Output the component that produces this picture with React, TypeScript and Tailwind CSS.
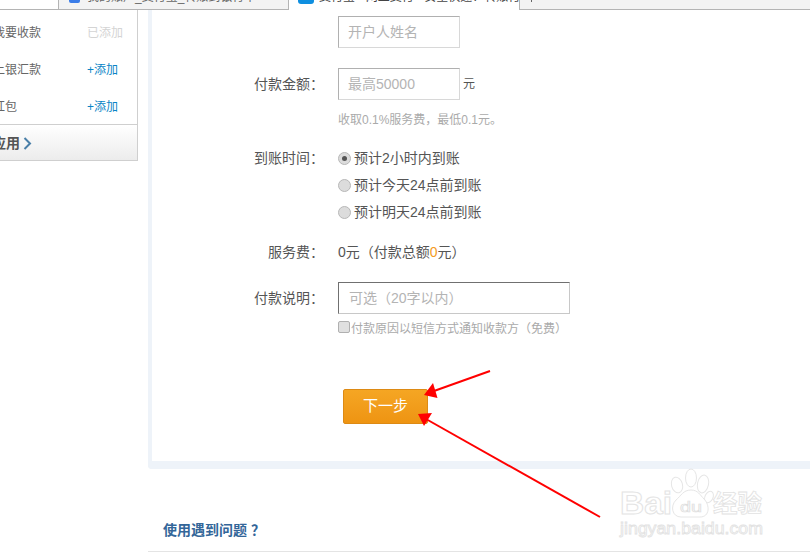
export default function App() {
  const cjk = "font-['Liberation_Sans','Noto_Sans_CJK_SC',sans-serif]";
  return (
    <div className={`relative w-[810px] h-[556px] overflow-hidden bg-white text-[14px] text-[#555] ${cjk}`}>
      <div className="flex h-[10px] overflow-hidden">
        <div className="w-[58px] border-b border-[#b4b4b4]" />
        <div className="flex items-start w-[231px] bg-[#f3f3f3] border-l border-r border-b border-[#b4b4b4] pl-[10px] gap-[7px] overflow-hidden">
          <div className="w-[11px] h-[3px] rounded-b-[2px] bg-[#3b7de8] shrink-0" />
          <div className="h-[12px] leading-[12px] text-[12px] text-[#666] whitespace-nowrap -translate-y-[9px]">我的账户_支付宝_转账到银行卡</div>
        </div>
        <div className="flex items-start w-[230px] pl-[9px] gap-[5px] overflow-hidden">
          <div className="w-[16px] h-[4px] rounded-b-[3px] bg-[#0f8fe0] shrink-0" />
          <div className="h-[14px] leading-[14px] text-[12px] text-[#444] whitespace-nowrap -translate-y-[10px]">支付宝 - 网上支付 - 安全快速！转账付款</div>
        </div>
        <div className="flex-1 bg-[#f3f3f3] border-l border-b border-[#b4b4b4] pl-[11px]">
          <div className="w-[1px] h-[2px] bg-[#666]" />
        </div>
      </div>

      <div className="flex h-[546px]">
        <aside className="w-[148px] shrink-0">
          <div className="w-[138px] border-r border-b border-[#cfcfcf]">
            <div className="flex flex-col h-[114px] text-[12px] text-[#666] pt-[4px]">
              {[
                ["我要收款", "已添加", "text-[#d4d4d4]"],
                ["上银汇款", "+添加", "text-[#0a84c6]"],
                ["红包", "+添加", "text-[#0a84c6]"],
              ].map(([a, b, c]) => (
                <div key={a} className="flex shrink-0 h-[37px] items-center -ml-[7px]">
                  <span className="w-[94px]">{a}</span>
                  <span className={c}>{b}</span>
                </div>
              ))}
            </div>
            <div className="flex items-center h-[36px] pt-[1px] border-t border-[#cfcfcf] bg-gradient-to-b from-white to-[#ececec] -ml-[8px] gap-[3px]">
              <span className="font-bold text-[#555]">应用</span>
              <svg width="9" height="13" viewBox="0 0 9 13"><path d="M1.5 1l5.5 5.5L1.500 12" fill="none" stroke="#4a7fa8" strokeWidth="2" /></svg>
            </div>
          </div>
        </aside>

        <main className="flex-1 flex flex-col">
          <div className="h-[459px] border-l-[4px] border-b-[8px] border-[#eef3f9] rounded-bl-[4px] flex flex-col pl-[186px] pt-[6px]">
            <div className="w-[122px] h-[32px] border border-[#d8d8d8] border-t-[#b0b0b0] border-l-[#b0b0b0] pl-[9px] leading-[30px] text-[#b4b4b4]">开户人姓名</div>

            <div className="flex items-center mt-[20px] h-[32px]">
              <span className="w-[84px] -ml-[98px] mr-[14px] text-right whitespace-nowrap">付款金额：</span>
              <div className="w-[122px] h-[32px] border border-[#d8d8d8] border-t-[#b0b0b0] border-l-[#b0b0b0] pl-[9px] leading-[30px] text-[#b4b4b4]">最高50000</div>
              <span className="ml-[3px] text-[12px]">元</span>
            </div>
            <div className="mt-[12px] text-[12px] leading-[16px] text-[#aaa]">收取0.1%服务费，最低0.1元。</div>

            <div className="flex mt-[17px]">
              <span className="w-[84px] -ml-[98px] mr-[14px] text-right leading-[27px] whitespace-nowrap">到账时间：</span>
              <div className="flex flex-col">
                {["预计2小时内到账", "预计今天24点前到账", "预计明天24点前到账"].map((t, i) => (
                  <div key={t} className="flex items-center h-[27px] gap-[3px]">
                    <span className="flex items-center justify-center w-[13px] h-[13px] rounded-full bg-[#dcdcdc] border border-[#b8b8b8]">
                      {i === 0 && <span className="w-[5px] h-[5px] rounded-full bg-[#555]" />}
                    </span>
                    <span>{t}</span>
                  </div>
                ))}
              </div>
            </div>

            <div className="flex mt-[13px] leading-[27px]">
              <span className="w-[84px] -ml-[98px] mr-[14px] text-right whitespace-nowrap">服务费：</span>
              <span>0元（付款总额<span className="text-[#f59a23]">0</span>元）</span>
            </div>

            <div className="flex items-center mt-[16px] h-[32px]">
              <span className="w-[84px] -ml-[98px] mr-[14px] text-right whitespace-nowrap">付款说明：</span>
              <div className="w-[232px] h-[32px] border border-[#c8c8c8] border-t-[#707070] border-l-[#707070] pl-[10px] leading-[30px] text-[#b4b4b4]">可选（20字以内）</div>
            </div>
            <div className="flex items-center mt-[8px] h-[14px] text-[12px] text-[#aaa]">
              <span className="w-[12px] h-[12px] rounded-[2px] bg-[#e0e0e0] border border-[#b0b0b0] mr-[1px] -translate-y-[2px]" />
              <span className="whitespace-nowrap">付款原因以短信方式通知收款方（免费）</span>
            </div>
            <button className="ml-[5px] mt-[53px] w-[85px] h-[35px] rounded-[2px] border border-[#dd8a14] bg-gradient-to-b from-[#f5a623] to-[#ee9412] text-white text-[15px]">下一步</button>
          </div>
          <div className="h-[83px] border-b border-[#e4e4e4] flex items-end pl-[15px] pb-[10px]">
            <span className="font-bold text-[#336699]">使用遇到问题<span className="ml-[4px]">？</span></span>
          </div>
        </main>
      </div>

      <svg className="absolute left-0 top-0 pointer-events-none" width="810" height="556" viewBox="0 0 810 556">
        <line x1="490" y1="371" x2="434" y2="391" stroke="#ff0000" strokeWidth="2" />
        <polygon points="424,395 433,383 437.500,398" fill="#ff0000" />
        <line x1="600" y1="517" x2="426" y2="419" stroke="#ff0000" strokeWidth="2" />
        <polygon points="418,414 432,413 424,426" fill="#ff0000" />
      </svg>

      <svg className="absolute left-0 top-0 pointer-events-none" width="810" height="556" viewBox="0 0 810 556">
        <g fill="#ffffff" stroke="#e6e6e6" strokeWidth="1">
          <ellipse cx="677" cy="485" rx="5.500" ry="8" transform="rotate(-15 677 485)" />
          <ellipse cx="691" cy="478" rx="5.500" ry="9" />
          <ellipse cx="703" cy="484" rx="5.500" ry="9" transform="rotate(12 703 484)" />
          <ellipse cx="709" cy="497" rx="4" ry="6" transform="rotate(25 709 497)" />
          <path d="M691 490c7 0 9 5 13 9 6 6 6 18-4 18h-19c-9 0-11-11-5-17 5-4 7-10 15-10z" />
        </g>
        <text x="680" y="512" fontSize="15" textLength="22" lengthAdjust="spacingAndGlyphs" fill="#fff" stroke="#dedede" strokeWidth="0.7" fontFamily="Liberation Sans">du</text>
        <text x="620" y="514" fontSize="31" fontWeight="700" textLength="52" lengthAdjust="spacingAndGlyphs" fill="#fff" stroke="#e4e4e4" strokeWidth="1" fontFamily="Liberation Sans">Bai</text>
        <text x="713" y="512" fontSize="24" fontWeight="700" textLength="49" lengthAdjust="spacingAndGlyphs" fill="#fff" stroke="#e2e2e2" strokeWidth="0.8" fontFamily="Noto Sans CJK SC">经验</text>
        <text x="620" y="534" fontSize="16" textLength="143" lengthAdjust="spacingAndGlyphs" fill="#fff" stroke="#e2e2e2" strokeWidth="0.8" fontFamily="Liberation Sans">jingyan.baidu.com</text>
      </svg>
    </div>
  );
}
